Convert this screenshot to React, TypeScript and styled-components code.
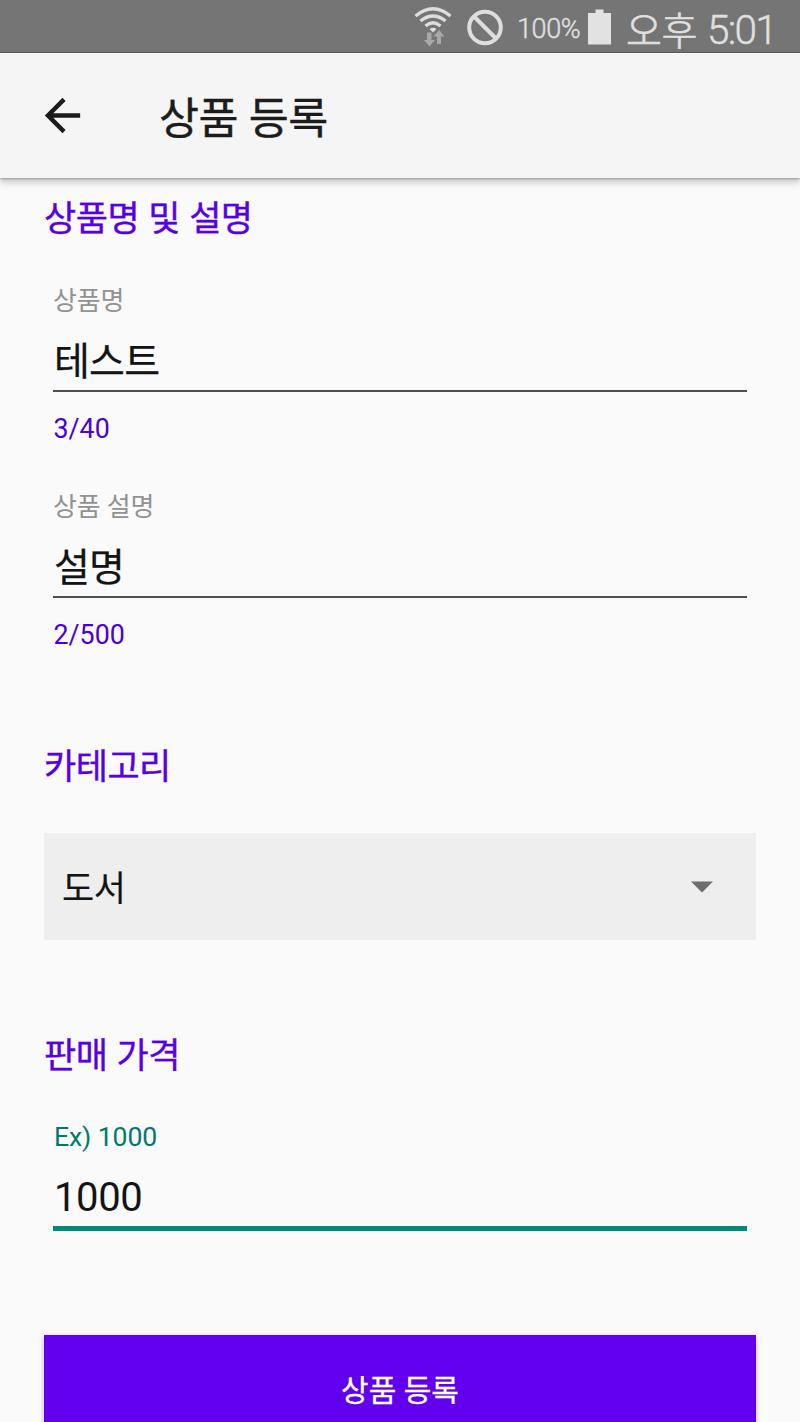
import React from 'react';
import styled, { createGlobalStyle } from 'styled-components';

const GlobalStyle = createGlobalStyle`
  * { box-sizing: border-box; }
  html, body { margin: 0; padding: 0; }
  body {
    background: #fafafa;
    color: #141414;
    font-family: Roboto, "Noto Sans CJK KR", sans-serif;
    overflow: hidden;
  }
`;

const Screen = styled.div`
  display: flex;
  flex-direction: column;
  width: 800px;
  height: 1422px;
  overflow: hidden;
  background: #fafafa;
`;

const StatusBar = styled.header`
  display: flex;
  flex: none;
  justify-content: flex-end;
  height: 53px;
  padding-right: 24px;
  background: #757575;
  border-bottom: 1px solid #5c5c5c;
  color: #e0e0e0;
  white-space: nowrap;
`;

const StatusIcon = styled.svg<{ $gap: number }>`
  display: block;
  flex: none;
  margin-right: ${(p) => p.$gap}px;
`;

const BatteryLevel = styled.span`
  width: 63px;
  margin-right: 8px;
  font-size: 27px;
  font-weight: 300;
  line-height: 58px;
  letter-spacing: -0.4px;
  -webkit-text-stroke: 0.4px currentColor;
`;

const Clock = styled.span`
  display: flex;
  width: 150px;
  justify-content: space-between;
  font-size: 40.5px;
  font-weight: 300;
  line-height: 60px;
`;

const Meridiem = styled.span`
  font-size: 39px;
  line-height: 64px;
  letter-spacing: -0.5px;
  -webkit-text-stroke: 0.7px currentColor;
`;

const Time = styled.span`
  letter-spacing: -1.7px;
  -webkit-text-stroke: 0.4px currentColor;
`;

const AppBar = styled.nav`
  position: relative;
  display: flex;
  flex: none;
  align-items: center;
  height: 125px;
  padding-left: 36px;
  background: #f5f5f5;
  border-top: 1px solid #ffffff;
  box-shadow: 0 1px 2px rgba(0, 0, 0, 0.28), 0 4px 8px rgba(0, 0, 0, 0.22);
`;

const BackButton = styled.button`
  width: 53px;
  height: 53px;
  margin-bottom: 2px;
  padding: 0;
  border: 0;
  background: none;
  color: #1c1c1c;
`;

const Title = styled.h1`
  margin: 7px 0 0 70px;
  font-size: 43.5px;
  font-weight: 400;
  line-height: 60px;
  letter-spacing: -0.4px;
  -webkit-text-stroke: 0.4px currentColor;
  color: #1c1c1c;
`;

const Form = styled.main`
  display: flex;
  flex-direction: column;
  padding: 16px 44px 0;
`;

const Section = styled.section<{ $height: number }>`
  flex: none;
  height: ${(p) => p.$height}px;
`;

const SectionTitle = styled.h2`
  height: 50px;
  margin: 0;
  font-size: 35px;
  font-weight: 400;
  line-height: 52px;
  letter-spacing: -0.5px;
  word-spacing: 1px;
  -webkit-text-stroke: 0.4px currentColor;
  color: #5600e8;
`;

const Field = styled.label`
  display: block;
  height: 206px;
  margin: 0 9px;
  padding-top: 37px;
`;

const FieldLabel = styled.span<{ $active?: boolean }>`
  display: block;
  height: 40px;
  padding-left: ${(p) => (p.$active ? 1 : 0)}px;
  font-size: ${(p) => (p.$active ? 26.6 : 26)}px;
  line-height: ${(p) => (p.$active ? 37 : 40)}px;
  letter-spacing: ${(p) => (p.$active ? -0.1 : -0.2)}px;
  color: ${(p) => (p.$active ? '#00796b' : '#929292')};
`;

const FieldValue = styled.span<{ $active?: boolean }>`
  display: block;
  height: ${(p) => (p.$active ? 73 : 71)}px;
  padding-left: 1px;
  font-size: ${(p) => (p.$active ? 40 : 39)}px;
  line-height: ${(p) => (p.$active ? 80 : 82)}px;
  letter-spacing: ${(p) => (p.$active ? -0.4 : -0.8)}px;
  -webkit-text-stroke: ${(p) => (p.$active ? 0 : 0.25)}px currentColor;
  border-bottom: ${(p) => (p.$active ? '5px solid #00897b' : '2px solid #4e4e4e')};
`;

const Counter = styled.span`
  display: block;
  margin-top: 17px;
  padding-left: 0.5px;
  font-size: 26.8px;
  line-height: 40px;
  color: #4a00d8;
`;

const Select = styled.div`
  display: flex;
  align-items: center;
  justify-content: space-between;
  height: 107px;
  margin-top: 41px;
  padding: 0 43px 0 18px;
  background: #eeeeee;
  font-size: 35px;
  line-height: 50px;
  letter-spacing: -0.5px;
`;

const SelectValue = styled.span`
  padding-top: 6px;
  -webkit-text-stroke: 0.15px currentColor;
`;

const Submit = styled.button`
  flex: none;
  height: 107px;
  padding: 4px 0 0;
  border: 0;
  background: #6200ee;
  box-shadow: 0 2px 5px rgba(0, 0, 0, 0.25);
  color: #fff;
  font-family: inherit;
  font-size: 30px;
  font-weight: 400;
  line-height: 50px;
  -webkit-text-stroke: 0.3px currentColor;
`;

export default function App() {
  return (
    <>
      <GlobalStyle />
      <Screen>
        <StatusBar>
          <StatusIcon $gap={14} width="40" height="52" viewBox="0 0 40 52">
            <g fill="none" stroke="#dedede" strokeWidth="3.2">
              <path d="M2.500 16Q20 1.500 37.500 16" />
              <path d="M7.500 21Q20 11 32.500 21" />
              <path d="M12.500 26Q20 19.500 27.500 26" />
            </g>
            <path d="M16.500 29Q20 26.500 23.500 29L20 32.500Z" fill="#dedede" />
            <path d="M14 32.500h4.500v7.500h3.500l-5.500 6.500-5.500-6.500h3z" fill="#a8a8a8" />
            <path d="M24 44v-7.500h-3.500l5.500-6.500 5.500 6.500h-3.500v7.500z" fill="#a8a8a8" />
          </StatusIcon>
          <StatusIcon $gap={14} width="36" height="52" viewBox="0 0 36 52">
            <circle cx="18" cy="27.500" r="15.800" fill="none" stroke="#dedede" strokeWidth="4" />
            <path d="M7 16.500L29 38.500" stroke="#dedede" strokeWidth="4" />
          </StatusIcon>
          <BatteryLevel>100%</BatteryLevel>
          <StatusIcon $gap={15} width="23" height="52" viewBox="0 0 23 52">
            <path d="M0 13h7.500V9.500h8V13H23v31.500H0z" fill="#e2e2e2" />
          </StatusIcon>
          <Clock>
            <Meridiem>오후</Meridiem>
            <Time>5:01</Time>
          </Clock>
        </StatusBar>
        <AppBar>
          <BackButton aria-label="뒤로">
            <svg width="53" height="53" viewBox="0 0 24 24" fill="currentColor">
              <path d="M20 11H7.830l5.590-5.590L12 4l-8 8 8 8 1.410-1.410L7.830 13H20v-2z" />
            </svg>
          </BackButton>
          <Title>상품 등록</Title>
        </AppBar>
        <Form>
          <Section $height={548}>
            <SectionTitle>상품명 및 설명</SectionTitle>
            <Field>
              <FieldLabel>상품명</FieldLabel>
              <FieldValue>테스트</FieldValue>
              <Counter>3/40</Counter>
            </Field>
            <Field>
              <FieldLabel>상품 설명</FieldLabel>
              <FieldValue>설명</FieldValue>
              <Counter>2/500</Counter>
            </Field>
          </Section>
          <Section $height={289}>
            <SectionTitle>카테고리</SectionTitle>
            <Select>
              <SelectValue>도서</SelectValue>
              <svg width="22" height="12" viewBox="0 0 22 12">
                <path d="M0 0.500H22L11 11.500Z" fill="#6d6d6d" />
              </svg>
            </Select>
          </Section>
          <Section $height={304}>
            <SectionTitle>판매 가격</SectionTitle>
            <Field>
              <FieldLabel $active>Ex) 1000</FieldLabel>
              <FieldValue $active>1000</FieldValue>
            </Field>
          </Section>
          <Submit>상품 등록</Submit>
        </Form>
      </Screen>
    </>
  );
}
